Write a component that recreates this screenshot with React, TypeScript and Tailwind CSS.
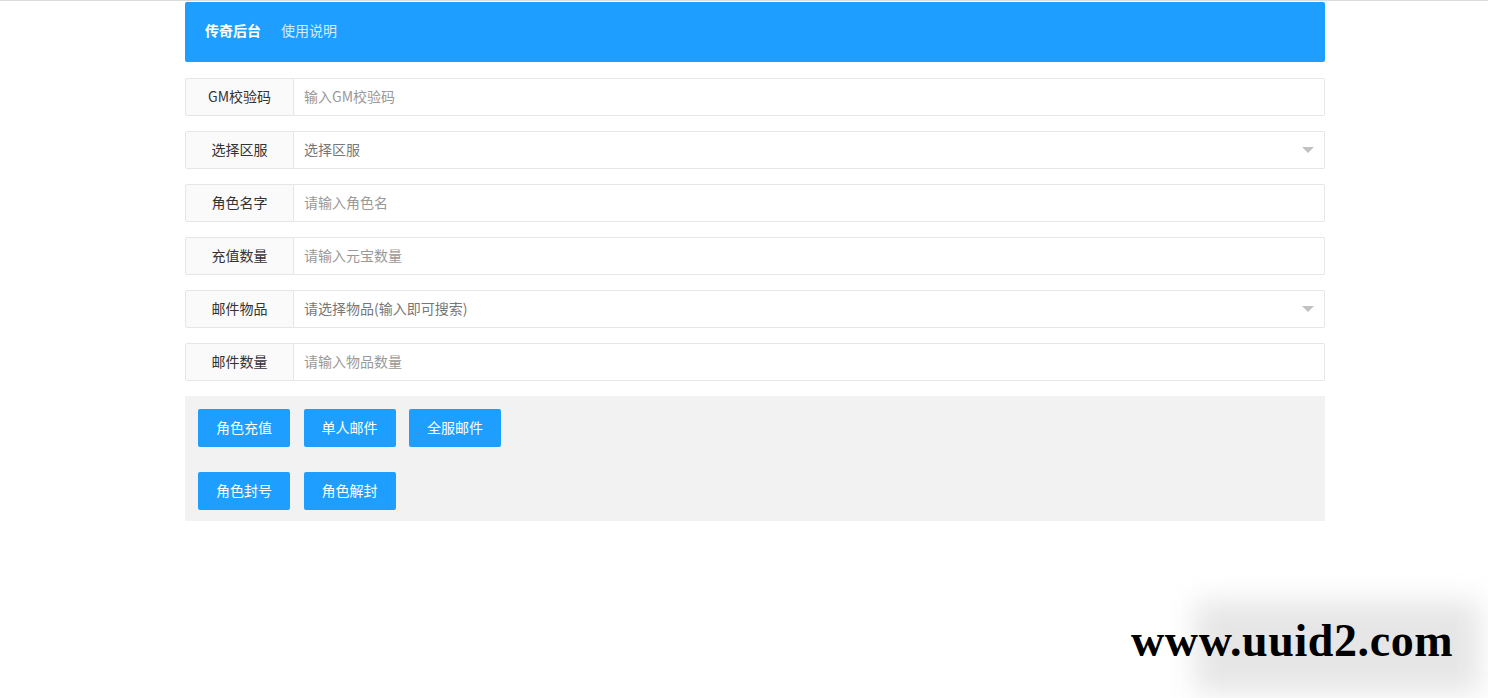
const rows = [
  { label: "GM校验码", placeholder: "输入GM校验码", select: false },
  { label: "选择区服", placeholder: "选择区服", select: true },
  { label: "角色名字", placeholder: "请输入角色名", select: false },
  { label: "充值数量", placeholder: "请输入元宝数量", select: false },
  { label: "邮件物品", placeholder: "请选择物品(输入即可搜索)", select: true },
  { label: "邮件数量", placeholder: "请输入物品数量", select: false },
];

const buttonRows = [
  ["角色充值", "单人邮件", "全服邮件"],
  ["角色封号", "角色解封"],
];

export default function App() {
  return (
    <div
      className="relative min-h-[698px] overflow-hidden border-t border-[#dcdcdc] bg-white"
      style={{ fontFamily: '"Noto Sans CJK SC", "Liberation Sans", sans-serif' }}
    >
      <div className="ml-[185px] w-[1140px] pt-[1px]">
        {/* header */}
        <div className="flex h-[60px] items-center rounded-[2px] bg-[#1E9FFF] px-5 pb-[3px] text-[14px]">
          <span className="font-bold text-white">传奇后台</span>
          <span className="ml-5 text-white/80">使用说明</span>
        </div>

        {/* form */}
        <div className="mt-4 flex flex-col gap-[15px]">
          {rows.map((row) => (
            <div key={row.label} className="flex h-[38px] text-[14px]">
              <div className="flex w-[109px] shrink-0 items-center justify-center rounded-l-[2px] border border-[#e6e6e6] bg-[#fafafa] pb-[2px] text-[#333]">
                {row.label}
              </div>
              <div className="relative flex flex-1 items-center rounded-r-[2px] border border-l-0 border-[#e6e6e6] bg-white pb-[2px] pl-[10px]">
                <span className={row.select ? "text-[#777]" : "text-[#999]"}>{row.placeholder}</span>
                {row.select && (
                  <span className="absolute right-[10px] top-1/2 -mt-[3px] h-0 w-0 border-x-[6px] border-t-[6px] border-x-transparent border-t-[#c2c2c2]" />
                )}
              </div>
            </div>
          ))}
        </div>

        {/* actions */}
        <div className="mt-[15px] flex flex-col gap-[25px] bg-[#f2f2f2] px-[13px] pb-[11px] pt-[13px]">
          {buttonRows.map((group, i) => (
            <div key={i} className="flex gap-[13.5px]">
              {group.map((b) => (
                <button
                  key={b}
                  className="h-[38px] w-[92px] rounded-[2px] bg-[#1E9FFF] pb-[2px] text-[14px] text-white"
                >
                  {b}
                </button>
              ))}
            </div>
          ))}
        </div>
      </div>

      {/* watermark */}
      <div className="absolute left-[1195px] top-[600px] h-[92px] w-[285px] bg-[#e6e6e6] blur-[14px]" />
      <div
        className="absolute left-[1131px] top-[617px] text-[46px] font-bold leading-none tracking-[0.6px] text-black"
        style={{ fontFamily: '"Liberation Serif", serif' }}
      >
        www.uuid2.com
      </div>
    </div>
  );
}
